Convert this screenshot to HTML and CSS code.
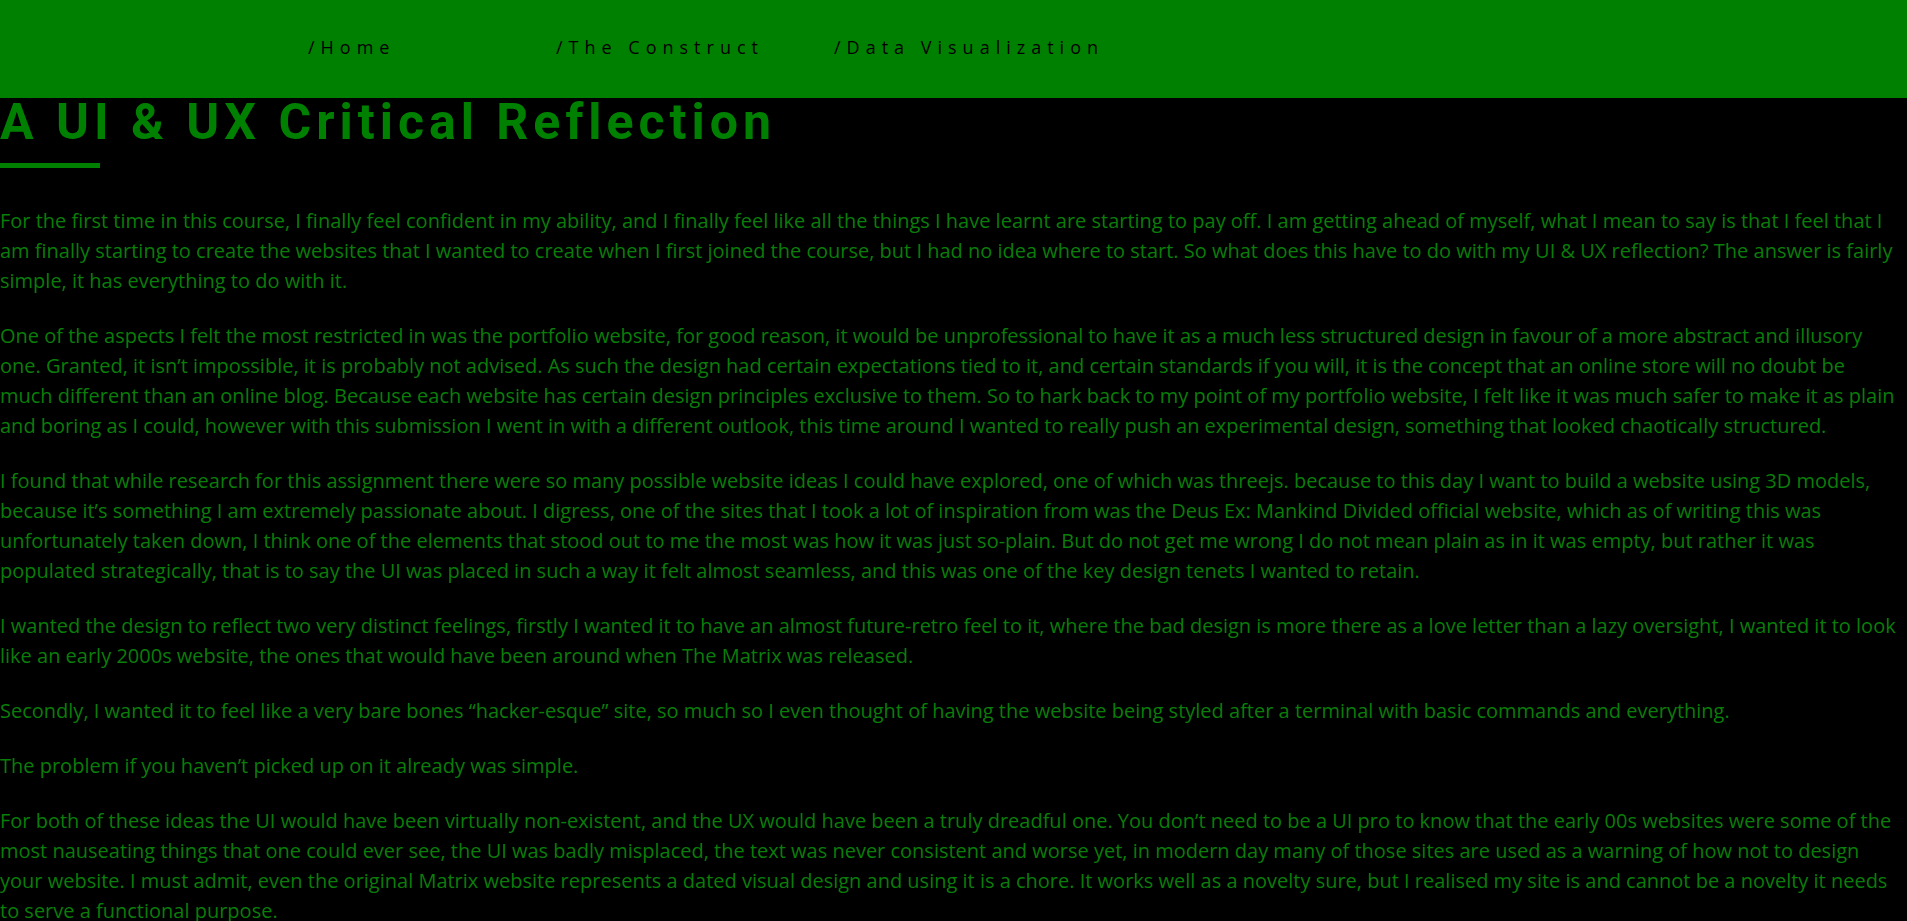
FILE: index.html
```html
<!DOCTYPE html>
<html lang="en">
<head>
<meta charset="utf-8">
<title>A UI &amp; UX Critical Reflection</title>
<link rel="stylesheet" href="styles.css">
</head>
<body>
<header class="topbar">
  <nav class="nav">
    <a class="nav-link nav-home" href="#">/Home</a>
    <a class="nav-link nav-construct" href="#">/The Construct</a>
    <a class="nav-link" href="#">/Data Visualization</a>
  </nav>
</header>
<main class="article">
  <h1 class="title">A UI &amp; UX Critical Reflection</h1>
  <div class="rule"></div>
  <p>For the first time in this course, I finally feel confident in my ability, and I finally feel like all the things I have learnt are starting to pay off. I am getting ahead of myself, what I mean to say is that I feel that I am finally starting to create the websites that I wanted to create when I first joined the course, but I had no idea where to start. So what does this have to do with my UI &amp; UX reflection? The answer is fairly simple, it has everything to do with it.</p>
  <p>One of the aspects I felt the most restricted in was the portfolio website, for good reason, it would be unprofessional to have it as a much less structured design in favour of a more abstract and illusory one. Granted, it isn’t impossible, it is probably not advised. As such the design had certain expectations tied to it, and certain standards if you will, it is the concept that an online store will no doubt be much different than an online blog. Because each website has certain design principles exclusive to them. So to hark back to my point of my portfolio website, I felt like it was much safer to make it as plain and boring as I could, however with this submission I went in with a different outlook, this time around I wanted to really push an experimental design, something that looked chaotically structured.</p>
  <p>I found that while research for this assignment there were so many possible website ideas I could have explored, one of which was threejs. because to this day I want to build a website using 3D models, because it’s something I am extremely passionate about. I digress, one of the sites that I took a lot of inspiration from was the Deus Ex: Mankind Divided official website, which as of writing this was unfortunately taken down, I think one of the elements that stood out to me the most was how it was just so-plain. But do not get me wrong I do not mean plain as in it was empty, but rather it was populated strategically, that is to say the UI was placed in such a way it felt almost seamless, and this was one of the key design tenets I wanted to retain.</p>
  <p>I wanted the design to reflect two very distinct feelings, firstly I wanted it to have an almost future-retro feel to it, where the bad design is more there as a love letter than a lazy oversight, I wanted it to look like an early 2000s website, the ones that would have been around when The Matrix was released.</p>
  <p>Secondly, I wanted it to feel like a very bare bones “hacker-esque” site, so much so I even thought of having the website being styled after a terminal with basic commands and everything.</p>
  <p>The problem if you haven’t picked up on it already was simple.</p>
  <p>For both of these ideas the UI would have been virtually non-existent, and the UX would have been a truly dreadful one. You don’t need to be a UI pro to know that the early 00s websites were some of the most nauseating things that one could ever see, the UI was badly misplaced, the text was never consistent and worse yet, in modern day many of those sites are used as a warning of how not to design your website. I must admit, even the original Matrix website represents a dated visual design and using it is a chore. It works well as a novelty sure, but I realised my site is and cannot be a novelty it needs to serve a functional purpose.</p>
</main>
</body>
</html>
```

FILE: styles.css
```css
html, body {
  margin: 0;
  padding: 0;
  background: #000;
}

body {
  font-family: "Open Sans", "Liberation Sans", sans-serif;
  color: #0a7d0a;
}

.topbar {
  background: #008000;
  height: 98px;
  box-sizing: border-box;
  padding-top: 27px;
}

.nav {
  display: flex;
  padding-left: 308px;
}

.nav-link {
  color: #000;
  text-decoration: none;
  font-size: 18px;
  letter-spacing: 6px;
  line-height: 40px;
}

.nav-home {
  width: 248px;
}

.nav-construct {
  width: 278px;
}

.article {
  padding: 0 8px 0 0;
}

.title {
  margin: 0;
  font-family: Roboto, "Liberation Sans", sans-serif;
  font-weight: 700;
  font-size: 50px;
  letter-spacing: 5px;
  line-height: 48px;
  color: #008000;
}

.rule {
  width: 100px;
  height: 5px;
  background: #008000;
  margin: 17px 0 38px;
}

.article p {
  margin: 0 0 25px;
  font-size: 20px;
  line-height: 30px;
}
```
